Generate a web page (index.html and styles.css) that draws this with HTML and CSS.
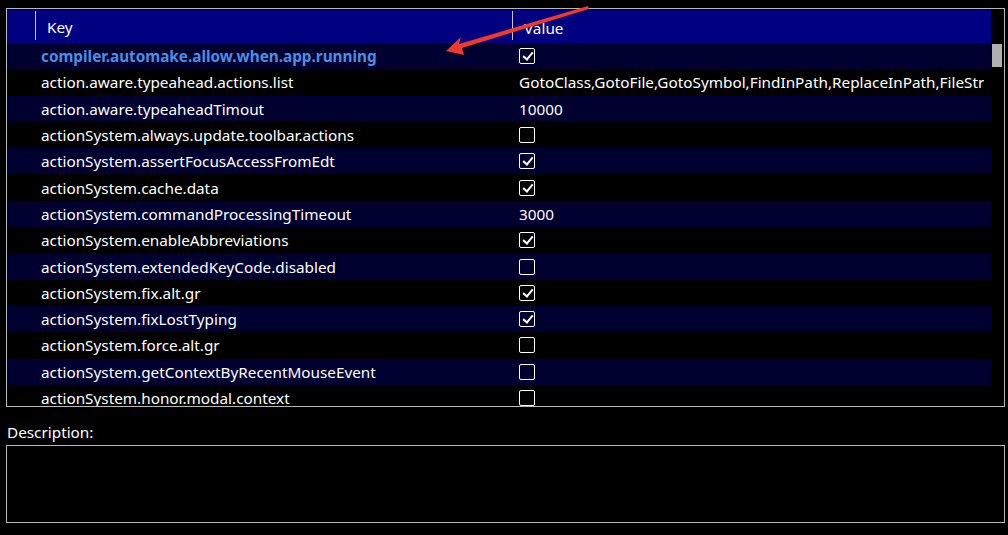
FILE: index.html
```html
<!DOCTYPE html>
<html>
<head>
<meta charset="utf-8">
<link rel="stylesheet" href="styles.css">
</head>
<body>
<div class="frame">
  <div class="table">
    <div class="header">
      <div class="hcell gutter"></div>
      <div class="hcell key">Key</div>
      <div class="hcell value">Value</div>
    </div>
    <div class="body">
      <div class="rows">
        <div class="row odd"><div class="gutter"></div><div class="key bold">compiler.automake.allow.when.app.running</div><div class="value"><span class="cb on"></span></div></div>
        <div class="row even"><div class="gutter"></div><div class="key">action.aware.typeahead.actions.list</div><div class="value"><span class="clip">GotoClass,GotoFile,GotoSymbol,FindInPath,ReplaceInPath,FileStr</span></div></div>
        <div class="row odd"><div class="gutter"></div><div class="key">action.aware.typeaheadTimout</div><div class="value">10000</div></div>
        <div class="row even"><div class="gutter"></div><div class="key">actionSystem.always.update.toolbar.actions</div><div class="value"><span class="cb"></span></div></div>
        <div class="row odd"><div class="gutter"></div><div class="key">actionSystem.assertFocusAccessFromEdt</div><div class="value"><span class="cb on"></span></div></div>
        <div class="row even"><div class="gutter"></div><div class="key">actionSystem.cache.data</div><div class="value"><span class="cb on"></span></div></div>
        <div class="row odd"><div class="gutter"></div><div class="key">actionSystem.commandProcessingTimeout</div><div class="value">3000</div></div>
        <div class="row even"><div class="gutter"></div><div class="key">actionSystem.enableAbbreviations</div><div class="value"><span class="cb on"></span></div></div>
        <div class="row odd"><div class="gutter"></div><div class="key">actionSystem.extendedKeyCode.disabled</div><div class="value"><span class="cb"></span></div></div>
        <div class="row even"><div class="gutter"></div><div class="key">actionSystem.fix.alt.gr</div><div class="value"><span class="cb on"></span></div></div>
        <div class="row odd"><div class="gutter"></div><div class="key">actionSystem.fixLostTyping</div><div class="value"><span class="cb on"></span></div></div>
        <div class="row even"><div class="gutter"></div><div class="key">actionSystem.force.alt.gr</div><div class="value"><span class="cb"></span></div></div>
        <div class="row odd"><div class="gutter"></div><div class="key">actionSystem.getContextByRecentMouseEvent</div><div class="value"><span class="cb"></span></div></div>
        <div class="row even"><div class="gutter"></div><div class="key">actionSystem.honor.modal.context</div><div class="value"><span class="cb"></span></div></div>
      </div>
      <div class="scrollbar"><div class="thumb"></div></div>
    </div>
  </div>
  <div class="desc-label">Description:</div>
  <div class="desc-box"></div>
</div>
<svg class="arrow" width="1008" height="70" viewBox="0 0 1008 70">
  <polygon points="446,51 461,37 459,44 588,6 589,9 462,48 464,55" fill="#f0392b"/>
</svg>
</body>
</html>
```
FILE: styles.css
```css
html, body {
  margin: 0;
  padding: 0;
  background: #000;
}
body {
  font-family: "Noto Sans", "Open Sans", sans-serif;
  font-size: 15.3px;
  color: #fff;
  width: 1008px;
  height: 535px;
  overflow: hidden;
  position: relative;
}
.frame {
  padding: 8px 3px 0 6px;
}
.table {
  width: 997px;
  height: 396px;
  border: 1px solid #b8b8b8;
  padding: 1px 0 0 0;
  display: flex;
  flex-direction: column;
  overflow: hidden;
  box-sizing: content-box;
}
.header {
  height: 33px;
  width: 984px;
  background: #000080;
  display: flex;
  flex: none;
}
.hcell {
  display: flex;
  align-items: center;
  box-sizing: border-box;
  padding-top: 2px;
}
.hcell.gutter {
  width: 29px;
  border-right: 1px solid #c8c8c8;
  margin: 1px 0 3px 0;
}
.hcell.key {
  width: 477px;
  padding-left: 11px;
  border-right: 1px solid #c8c8c8;
  margin: 1px 0 3px 0;
}
.hcell.value {
  padding-left: 11px;
  flex: 1;
}
.body {
  flex: 1;
  display: flex;
  min-height: 0;
}
.rows {
  width: 984px;
  flex: none;
  overflow: hidden;
}
.row {
  height: 26.3px;
  display: flex;
  align-items: center;
  white-space: nowrap;
}
.row.odd { background: #000030; }
.row.even { background: #000; }
.row .gutter { width: 29px; flex: none; }
.row .key {
  width: 477px;
  flex: none;
  padding-left: 5px;
  box-sizing: border-box;
}
.row .key.bold {
  font-weight: bold;
  color: #4a8fe6;
}
.row .value {
  flex: 1;
  min-width: 0;
  padding-left: 6px;
  display: flex;
  align-items: center;
}
.clip {
  display: block;
  overflow: hidden;
  white-space: nowrap;
}
.cb {
  display: inline-block;
  width: 16px;
  height: 16px;
  box-sizing: border-box;
  border: 1.5px solid #fff;
  border-radius: 2px;
  position: relative;
}
.cb.on::after {
  content: "";
  position: absolute;
  left: 4.5px;
  top: 1px;
  width: 4px;
  height: 8px;
  border-right: 2.5px solid #fff;
  border-bottom: 2.5px solid #fff;
  transform: rotate(40deg);
}
.scrollbar {
  width: 13px;
  flex: none;
  background: #000;
  padding: 0 2px 0 1px;
  box-sizing: border-box;
}
.thumb {
  width: 10px;
  height: 23px;
  margin-top: 1px;
  background: #b0b0b0;
}
.desc-label {
  margin-top: 14px;
  padding-left: 1px;
  height: 22px;
  line-height: 22px;
}
.desc-box {
  margin-top: 2px;
  width: 997px;
  height: 76px;
  border: 1px solid #b8b8b8;
}
.arrow {
  position: absolute;
  left: 0;
  top: 0;
}
```
